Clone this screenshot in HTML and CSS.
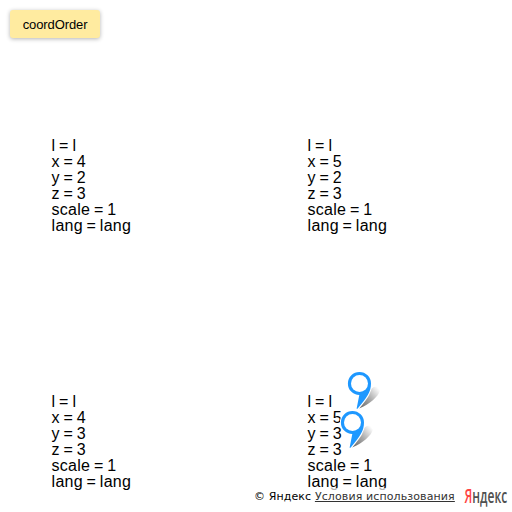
FILE: index.html
```
<!DOCTYPE html>
<html lang="ru">
<head>
<meta charset="utf-8">
<title>coordOrder</title>
<link rel="stylesheet" href="styles.css">
</head>
<body>
<main class="map">
  <div class="tiles">
    <div class="tile">l = l<br>x = 4<br>y = 2<br>z = 3<br>scale = 1<br>lang = lang</div>
    <div class="tile">l = l<br>x = 5<br>y = 2<br>z = 3<br>scale = 1<br>lang = lang</div>
    <div class="tile">l = l<br>x = 4<br>y = 3<br>z = 3<br>scale = 1<br>lang = lang</div>
    <div class="tile">l = l<br>x = 5<br>y = 3<br>z = 3<br>scale = 1<br>lang = lang</div>
  </div>
  <svg width="0" height="0" class="defs">
    <defs>
      <linearGradient id="shade" x1="12" y1="37" x2="33" y2="19" gradientUnits="userSpaceOnUse">
        <stop offset="0" stop-color="#000" stop-opacity=".6"/>
        <stop offset=".5" stop-color="#000" stop-opacity=".34"/>
        <stop offset="1" stop-color="#000" stop-opacity="0"/>
      </linearGradient>
      <g id="pin">
        <path d="M12 37.500 L24 18 C28 14 34 15 33 19.500 C31 26 23 33 12 37.500Z" fill="url(#shade)"/>
        <path d="M12.500 1a11.500 11.500 0 0 1 11.500 11.500c0 8.500-4 14-13.500 25.300h-.9l2.700-13.800A11.500 11.500 0 1 1 12.500 1Z" fill="#1e98ff" stroke="#fff" stroke-width="2.200" paint-order="stroke"/>
        <circle cx="12.500" cy="12.500" r="8.500" fill="#fff"/>
      </g>
    </defs>
  </svg>
  <svg class="pin pin-north" viewBox="0 0 37 42"><use href="#pin"/></svg>
  <svg class="pin pin-south" viewBox="0 0 37 42"><use href="#pin"/></svg>
  <button class="control">coordOrder</button>
  <footer class="copyrights">
    <span class="copyright-text">© Яндекс <a class="terms">Условия использования</a></span>
    <span class="logo"><span class="logo-text"><span class="logo-first">Я</span>ндекс</span></span>
  </footer>
</main>
</body>
</html>
```
FILE: styles.css
```
body {
  margin: 0;
  background: #fff;
}

.map {
  position: relative;
  width: 512px;
  height: 512px;
  overflow: hidden;
}

.tiles {
  display: grid;
  grid-template-columns: 256px 256px;
  grid-template-rows: 256px 256px;
}

.tile {
  box-sizing: border-box;
  padding: 138px 0 0 51.6px;
  font: 16px/16px "Liberation Sans", Arial, sans-serif;
  letter-spacing: .25px;
  word-spacing: -1px;
  color: #000;
}

.defs {
  position: absolute;
}

.pin {
  position: absolute;
  width: 37px;
  height: 42px;
}

.pin-north {
  left: 347px;
  top: 371px;
}

.pin-south {
  left: 340px;
  top: 410px;
}

.control {
  position: absolute;
  left: 10px;
  top: 10px;
  width: 90px;
  height: 28px;
  padding: 1px 0 0;
  border: 0;
  border-radius: 3px;
  background: #ffeba0;
  box-shadow: 0 1px 4px rgba(0, 0, 0, .3);
  font: 13px/28px "Liberation Sans", Arial, sans-serif;
  letter-spacing: -.1px;
  color: #000;
}

.copyrights {
  position: absolute;
  right: 0;
  bottom: 0;
  display: flex;
  width: 262px;
  height: 24px;
}

.copyright-text {
  box-sizing: border-box;
  width: 209px;
  height: 17px;
  padding: 1px 0 0 4px;
  background: rgba(255, 255, 255, .7);
  font: 11px/16px "DejaVu Sans", Verdana, sans-serif;
  letter-spacing: .11px;
  color: #000;
  white-space: nowrap;
}

.terms {
  color: #333;
  text-decoration: underline;
}

.logo {
  width: 53px;
  padding-left: 5px;
}

.logo-text {
  display: block;
  width: 60px;
  margin: -1px 0 0;
  font: 600 20px/18px "Open Sans", sans-serif;
  color: #505050;
  transform: translateX(4.500px) scaleX(.6);
  transform-origin: 0 0;
}

.logo-first {
  color: #f44;
}
```
